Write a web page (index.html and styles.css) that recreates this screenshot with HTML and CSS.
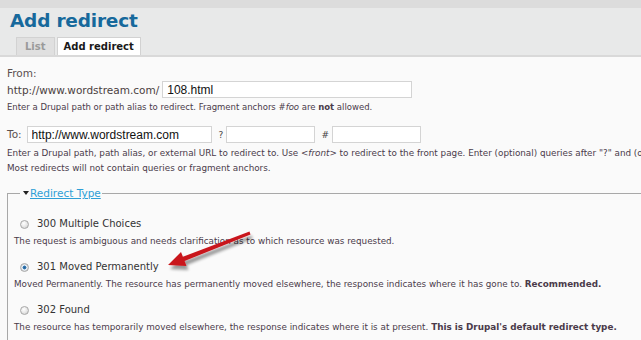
FILE: index.html
```html
<!DOCTYPE html>
<html lang="en">
<head>
    <meta charset="UTF-8">
    <title>Add redirect</title>
    <link rel="stylesheet" href="styles.css">
</head>
<body>
    <div class="top-band"></div>
    <header class="page-header">
        <h1>Add redirect</h1>
        <ul class="tabs">
            <li class="tab">List</li>
            <li class="tab active">Add redirect</li>
        </ul>
    </header>
    <main class="content">
        <div class="form-item from-item">
            <label class="field-label">From:</label>
            <div class="field-row from-row">
                <span class="prefix">http://www.wordstream.com/</span>
                <input type="text" class="text-input from-input" value="108.html">
            </div>
            <p class="description">Enter a Drupal path or path alias to redirect. Fragment anchors <em>#foo</em> are <strong>not</strong> allowed.</p>
        </div>

        <div class="form-item to-item">
            <div class="field-row">
                <label class="field-label inline">To:</label>
                <input type="text" class="text-input to-input" value="http://www.wordstream.com">
                <span class="sep">?</span>
                <input type="text" class="text-input query-input">
                <span class="sep hash">#</span>
                <input type="text" class="text-input fragment-input">
            </div>
            <p class="description nowrap">Enter a Drupal path, path alias, or external URL to redirect to. Use <em>&lt;front&gt;</em> to redirect to the front page. Enter (optional) queries after "?" and (optional) anchor after "#".</p>
            <p class="description second">Most redirects will not contain queries or fragment anchors.</p>
        </div>

        <fieldset class="redirect-type">
            <legend><span class="arrow-down"></span><a href="#">Redirect Type</a></legend>

            <div class="radio-item">
                <label class="radio-label"><input type="radio" name="type"> 300 Multiple Choices</label>
                <p class="description">The request is ambiguous and needs clarification as to which resource was requested.</p>
            </div>
            <div class="radio-item">
                <label class="radio-label"><input type="radio" name="type" checked> 301 Moved Permanently</label>
                <p class="description">Moved Permanently. The resource has permanently moved elsewhere, the response indicates where it has gone to. <strong>Recommended.</strong></p>
            </div>
            <div class="radio-item">
                <label class="radio-label"><input type="radio" name="type"> 302 Found</label>
                <p class="description">The resource has temporarily moved elsewhere, the response indicates where it is at present. <strong>This is Drupal's default redirect type.</strong></p>
            </div>
        </fieldset>
    </main>

    <!-- callout arrow drawn over the form -->
    <svg class="callout" width="100" height="55" viewBox="0 0 100 55">
        <defs>
            <filter id="shadow" x="-20%" y="-30%" width="150%" height="180%">
                <feGaussianBlur in="SourceAlpha" stdDeviation="1.5"/>
                <feOffset dx="2" dy="4"/>
                <feComponentTransfer><feFuncA type="linear" slope="0.4"/></feComponentTransfer>
                <feMerge><feMergeNode/><feMergeNode in="SourceGraphic"/></feMerge>
            </filter>
        </defs>
        <path filter="url(#shadow)" fill="#c9161e"
              d="M89.5 6.6 L90.5 9.4 L24.6 36 L26.5 41 L8 40 L21 27 L22.9 31.7 Z"/>
    </svg>
</body>
</html>
```

FILE: styles.css
```css
body {
    position: relative;
    margin: 0;
    padding: 0;
    font-family: "DejaVu Sans", Verdana, sans-serif;
    background: #fafafa;
    color: #3b3b3b;
    overflow: hidden;
}

.top-band {
    height: 8px;
    background: #dcdcdc;
}

.page-header {
    background: #e8e9e9;
    padding: 1px 0 0 10px;
    border-bottom: 2px solid #d9d9d9;
}

.page-header h1 {
    margin: 0;
    font-size: 18.5px;
    line-height: 24px;
    color: #17699c;
    font-weight: bold;
    letter-spacing: -0.2px;
}

.tabs {
    list-style: none;
    margin: 4px 0 0 6px;
    padding: 0;
    display: flex;
    gap: 2px;
}

.tab {
    height: 17px;
    line-height: 17px;
    padding: 0 8px;
    font-size: 10px;
    font-weight: bold;
    color: #9a9a9a;
    background: #e0e0e0;
    border: 1px solid #d2d2d2;
    border-bottom: none;
}

.tab.active {
    background: #fff;
    color: #1a1a1a;
    padding: 0 6px;
}

.content {
    padding: 10px 0 0 7px;
}

.form-item {
    margin-bottom: 12px;
}

.field-label {
    display: block;
    font-size: 10.5px;
    line-height: 13px;
    color: #5a5050;
}

.field-label.inline {
    display: inline;
    margin-right: 5px;
}

.field-row {
    display: flex;
    align-items: center;
}

.from-row {
    margin-top: 1px;
}

.prefix {
    font-size: 10.5px;
    color: #4a4040;
    margin-right: 3px;
}

.text-input {
    box-sizing: border-box;
    height: 17px;
    border: 1px solid #d4d4d4;
    background: #fff;
    font-family: "Liberation Sans", Arial, sans-serif;
    font-size: 12px;
    color: #111;
    padding: 0 4px;
    margin: 0;
}

.from-input { width: 250px; }
.to-input { width: 185px; }
.query-input { width: 89px; }
.fragment-input { width: 89px; }

.sep {
    font-size: 9px;
    color: #444;
    margin: 0 3px 0 7px;
}

.sep.hash {
    margin-left: 6px;
}

.description {
    margin: 3px 0 0 0;
    font-size: 8.8px;
    line-height: 13px;
    color: #4a3a4a;
}

.from-item .description {
    font-size: 8.5px;
}

.description.nowrap {
    white-space: nowrap;
}

.to-item .description {
    margin-top: 4px;
}

.to-item .description.second {
    margin-top: 2px;
}

.redirect-type {
    margin: 12px 0 0 0;
    padding: 18px 0 0 6px;
    border: none;
    border-top: 1px solid #a8a8a8;
    border-left: 1px solid #a8a8a8;
}

.redirect-type legend {
    margin-left: 6px;
    padding: 0 1px 0 3px;
    font-size: 10.5px;
    display: flex;
    align-items: center;
}

.arrow-down {
    width: 0;
    height: 0;
    border-left: 3px solid transparent;
    border-right: 3px solid transparent;
    border-top: 4px solid #222;
    margin-right: 1px;
}

.redirect-type legend a {
    color: #2e9fd6;
}

.radio-item {
    margin-bottom: 13px;
}

.radio-label {
    display: flex;
    align-items: center;
    font-size: 10px;
    line-height: 14px;
    color: #333;
}

.radio-label input {
    appearance: none;
    -webkit-appearance: none;
    width: 9px;
    height: 9px;
    margin: 0 8px 0 6px;
    border-radius: 50%;
    border: 1px solid #a8a8a8;
    background: radial-gradient(circle at 40% 35%, #fff 0, #e8e8e8 50%, #c8c8c8 100%);
}

.radio-label input:checked {
    background: radial-gradient(circle, #1f5f96 0, #3c7fb8 35%, #e8eef4 45%, #c8c8c8 100%);
}

.radio-item .description {
    margin-top: 4px;
    line-height: 12px;
}

.callout {
    position: absolute;
    left: 160px;
    top: 225px;
}
```
